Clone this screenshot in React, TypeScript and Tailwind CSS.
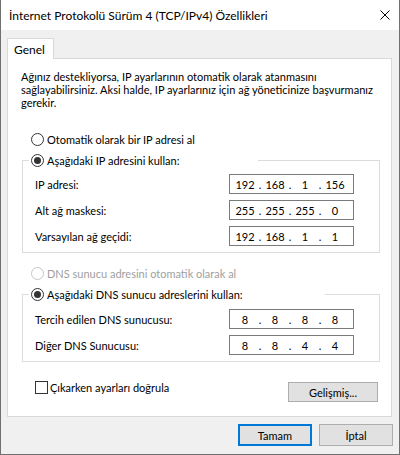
import type { ReactNode } from "react";

type Octets = [string, string, string, string];

const ipRows: { label: string; value: Octets }[] = [
  { label: "IP adresi:", value: ["192", "168", "1", "156"] },
  { label: "Alt ağ maskesi:", value: ["255", "255", "255", "0"] },
  { label: "Varsayılan ağ geçidi:", value: ["192", "168", "1", "1"] },
];

const dnsRows: { label: string; value: Octets }[] = [
  { label: "Tercih edilen DNS sunucusu:", value: ["8", "8", "8", "8"] },
  { label: "Diğer DNS Sunucusu:", value: ["8", "8", "4", "4"] },
];

function Radio({ checked, disabled }: { checked?: boolean; disabled?: boolean }) {
  return (
    <span
      className={`flex h-[13px] w-[13px] shrink-0 items-center justify-center rounded-full border bg-white ${
        disabled ? "border-[#c6c6c6]" : "border-[#333333]"
      }`}
    >
      {checked && <span className="h-[7px] w-[7px] rounded-full bg-[#333333]" />}
    </span>
  );
}

function RadioRow({
  label,
  checked,
  disabled,
}: {
  label: string;
  checked?: boolean;
  disabled?: boolean;
}) {
  return (
    <div className={`flex h-[15px] items-center gap-[3px] ${disabled ? "text-[#a0a0a0]" : ""}`}>
      <Radio checked={checked} disabled={disabled} />
      <span className="whitespace-nowrap">{label}</span>
    </div>
  );
}

function IpField({ value }: { value: Octets }) {
  return (
    <div className="flex h-[20px] w-[125px] items-center border border-[#7a7a7a] bg-white pl-[4px]">
      {value.map((part, i) => (
        <div key={i} className="flex items-center">
          {i > 0 && <span className="w-[8px] text-center">.</span>}
          <span className="w-[22px] text-center">{part}</span>
        </div>
      ))}
    </div>
  );
}

function FieldRow({ label, value }: { label: string; value: Octets }) {
  return (
    <div className="flex h-[20px] items-center">
      <span className="w-[194px] whitespace-nowrap">{label}</span>
      <IpField value={value} />
    </div>
  );
}

// the legend keeps the radio control's full width, so the top line starts well after the text
function Group({
  legend,
  legendWidth,
  children,
}: {
  legend: ReactNode;
  legendWidth: string;
  children: ReactNode;
}) {
  return (
    <fieldset className="border border-[#dcdcdc] pb-[6px] pl-[12px] pr-[25px]">
      <legend className={`-ml-[6px] px-[2px] ${legendWidth}`}>{legend}</legend>
      {children}
    </fieldset>
  );
}

function Button({ children, primary, className = "" }: { children: ReactNode; primary?: boolean; className?: string }) {
  return (
    <button
      className={`flex items-center justify-center bg-[#e1e1e1] ${
        primary ? "border-2 border-[#0078d7]" : "border border-[#adadad]"
      } ${className}`}
    >
      {children}
    </button>
  );
}

export default function App() {
  return (
    <div className="flex h-[455px] w-[400px] flex-col border-x border-b border-[#707070] bg-[#f0f0f0] font-['Lato',sans-serif] text-[11px] leading-[15px] text-black">
      <div className="flex h-[30px] shrink-0 items-center justify-between bg-white pl-[8px] pr-[9px]">
        <span className="whitespace-nowrap text-[12px]">İnternet Protokolü Sürüm 4 (TCP/IPv4) Özellikleri</span>
        <svg width="10" height="10" viewBox="0 0 10 10" className="shrink-0">
          <path d="M0.5 0.5 L9.5 9.5 M9.5 0.5 L0.5 9.5" stroke="#000" strokeWidth="1" fill="none" />
        </svg>
      </div>

      <div className="flex flex-col px-[6px] pt-[8px]">
        <div className="relative z-10 -mb-px flex h-[21px] w-[47px] items-center border border-b-0 border-[#d9d9d9] bg-white pl-[6px] text-[12px]">
          Genel
        </div>

        <div className="flex h-[359px] w-[385px] flex-col border border-[#d9d9d9] bg-white pl-[14px] pr-[11px]">
          <p className="-ml-px mt-[11px] leading-[13px]">
            <span className="block whitespace-nowrap">Ağınız destekliyorsa, IP ayarlarının otomatik olarak atanmasını</span>
            <span className="block whitespace-nowrap">sağlayabilirsiniz. Aksi halde, IP ayarlarınız için ağ yöneticinize başvurmanız</span>
            <span className="block whitespace-nowrap">gerekir.</span>
          </p>

          <div className="ml-[9px] mt-[23px]">
            <RadioRow label="Otomatik olarak bir IP adresi al" />
          </div>

          <div className="mt-[6px]">
            <Group legendWidth="w-[229px]" legend={<RadioRow label="Aşağıdaki IP adresini kullan:" checked />}>
              <div className="mt-[6px] flex flex-col gap-[6px]">
                {ipRows.map((row) => (
                  <FieldRow key={row.label} label={row.label} value={row.value} />
                ))}
              </div>
            </Group>
          </div>

          <div className="ml-[9px] mt-[13px]">
            <RadioRow label="DNS sunucu adresini otomatik olarak al" disabled />
          </div>

          <div className="mt-[6px]">
            <Group legendWidth="w-[296px]" legend={<RadioRow label="Aşağıdaki DNS sunucu adreslerini kullan:" checked />}>
              <div className="mt-[7px] flex flex-col gap-[6px]">
                {dnsRows.map((row) => (
                  <FieldRow key={row.label} label={row.label} value={row.value} />
                ))}
              </div>
            </Group>
          </div>

          <div className="mt-[18px] flex items-start justify-between">
            <div className="ml-[13px] flex h-[15px] items-center gap-[2px]">
              <span className="h-[13px] w-[13px] border border-[#333333] bg-white" />
              <span className="whitespace-nowrap">Çıkarken ayarları doğrula</span>
            </div>
            <Button className="mr-[2px] mt-[2px] h-[20px] w-[90px]">Gelişmiş...</Button>
          </div>
        </div>

        <div className="mt-[7px] flex w-[386px] justify-end gap-[7px]">
          <Button primary className="h-[22px] w-[74px]">
            Tamam
          </Button>
          <Button className="h-[22px] w-[74px]">İptal</Button>
        </div>
      </div>
    </div>
  );
}
